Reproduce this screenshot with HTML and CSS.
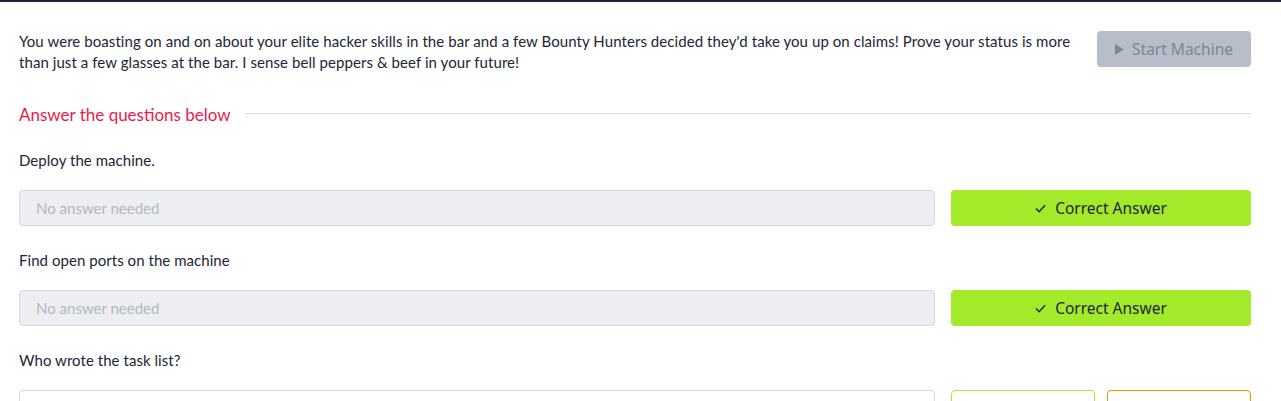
FILE: index.html
```html
<!DOCTYPE html>
<html>
<head>
<meta charset="utf-8">
<link rel="stylesheet" href="styles.css">
</head>
<body>
<div class="page">
  <div class="intro">
    <p class="intro-text">You were boasting on and on about your elite hacker skills in the bar and a few Bounty Hunters decided they'd take you up on claims! Prove your status is more than just a few glasses at the bar. I sense bell peppers &amp; beef in your future!</p>
    <button class="start-btn"><svg class="play" viewBox="0 0 10 12" width="9" height="11"><path d="M0 0 L10 6 L0 12 Z" fill="#7d8596"/></svg>Start Machine</button>
  </div>
  <div class="section-head">
    <span class="section-title">Answer the questions below</span>
    <span class="section-rule"></span>
  </div>
  <div class="question">
    <p class="q-text">Deploy the machine.</p>
    <div class="q-row">
      <div class="answer disabled">No answer needed</div>
      <button class="correct"><svg class="check" viewBox="0 0 12 10" width="11" height="9"><path d="M1 5 L4.5 8.5 L11 1.5" fill="none" stroke="#1c2538" stroke-width="1.6"/></svg>Correct Answer</button>
    </div>
  </div>
  <div class="question">
    <p class="q-text">Find open ports on the machine</p>
    <div class="q-row">
      <div class="answer disabled">No answer needed</div>
      <button class="correct"><svg class="check" viewBox="0 0 12 10" width="11" height="9"><path d="M1 5 L4.5 8.5 L11 1.5" fill="none" stroke="#1c2538" stroke-width="1.6"/></svg>Correct Answer</button>
    </div>
  </div>
  <div class="question">
    <p class="q-text">Who wrote the task list?</p>
    <div class="q-row">
      <div class="answer open"></div>
      <button class="submit">Submit</button>
      <button class="hint">Hint</button>
    </div>
  </div>
</div>
</body>
</html>
```

FILE: styles.css
```css
html, body {
  margin: 0;
  padding: 0;
  background: #ffffff;
}
body {
  border-top: 2px solid #1c2538;
  font-family: "Lato", "Liberation Sans", sans-serif;
  color: #1c2538;
  overflow: hidden;
}
.page {
  padding: 29px 30px 0 19px;
}
.intro {
  display: flex;
  align-items: flex-start;
  gap: 22px;
}
.intro-text {
  flex: 1;
  margin: 0;
  font-size: 15px;
  letter-spacing: 0.07px;
  line-height: 21px;
}
.start-btn {
  width: 154px;
  height: 36px;
  flex: none;
  border: none;
  border-radius: 4px;
  background: #b8bec9;
  color: #7d8596;
  font-family: "Noto Sans", sans-serif;
  font-size: 15.5px;
  display: flex;
  align-items: center;
  justify-content: center;
  gap: 8px;
  padding: 0;
}
.section-head {
  display: flex;
  align-items: center;
  gap: 14px;
  margin-top: 29px;
  height: 24px;
}
.section-title {
  color: #ea1a4f;
  font-size: 17px;
}
.section-rule {
  flex: 1;
  height: 1px;
  background: #d8dbe2;
  margin-top: -2px;
}
.question {
  margin-top: 23px;
}
.question + .question {
  margin-top: 23px;
}
.q-text {
  margin: 0;
  font-size: 15px;
  letter-spacing: 0.05px;
  line-height: 22px;
}
.q-row {
  display: flex;
  gap: 16px;
  margin-top: 19px;
  height: 36px;
}
.answer {
  flex: 1;
  box-sizing: border-box;
  height: 36px;
  border: 1px solid #d3d7de;
  border-radius: 4px;
  padding: 0 16px;
  display: flex;
  align-items: center;
  font-size: 15px;
}
.answer.disabled {
  background: #eceef2;
  color: #b3b8c2;
}
.answer.open {
  background: #ffffff;
}
.correct {
  width: 300px;
  flex: none;
  height: 36px;
  border: none;
  border-radius: 4px;
  background: #a3ea2a;
  color: #1c2538;
  font-family: "Noto Sans", sans-serif;
  font-size: 15.5px;
  display: flex;
  align-items: center;
  justify-content: center;
  gap: 9px;
  padding: 0;
}
.submit, .hint {
  width: 144px;
  flex: none;
  height: 36px;
  box-sizing: border-box;
  border-radius: 4px;
  background: #ffffff;
  font-family: "Noto Sans", sans-serif;
  font-size: 15.5px;
  padding: 0;
}
.submit {
  border: 1px solid #a3ea2a;
  color: #1c2538;
}
.hint {
  margin-left: -4px;
  border: 1px solid #ff8a00;
  color: #ff8a00;
}
```
